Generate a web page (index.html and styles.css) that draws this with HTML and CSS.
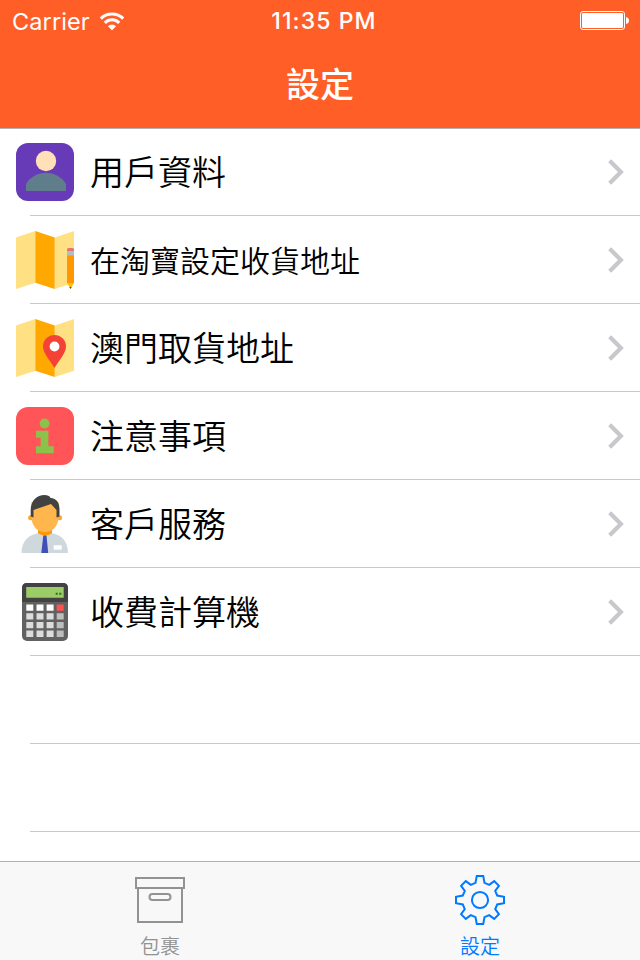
FILE: index.html
```
<!DOCTYPE html>
<html lang="zh-Hant">
	<head>
		<title>設定</title>
		<meta charset="utf-8">
		<link rel="stylesheet" href="styles.css">
	</head>

	<body>
		<div id="header">
			<div class="status">
				<div class="carrier">
					<span>Carrier</span>
					<svg class="wifi" width="26" height="19" viewBox="0 0 26 19">
						<path d="M1.8 6.6a16 16 0 0 1 22.4 0M5.8 10.8a10.2 10.2 0 0 1 14.4 0" fill="none" stroke="#fff" stroke-width="3.1"/>
						<path d="M13 18.2l-4-4a5.7 5.7 0 0 1 8 0z" fill="#fff"/>
					</svg>
				</div>
				<span class="clock">11:35 PM</span>
				<div class="power">
					<svg width="50" height="20" viewBox="0 0 50 20">
						<rect x=".5" y=".5" width="44" height="18" rx="2.5" fill="none" stroke="#fff"/>
						<rect x="2" y="2" width="41" height="15" rx="1.2" fill="#fff"/>
						<path d="M46 6q3 .5 3 3.500t-3 3.500z" fill="#fff"/>
					</svg>
				</div>
			</div>
			<h1>設定</h1>
		</div>

		<ul id="menu">
			<li>
				<svg class="icon" viewBox="0 0 58 58">
					<rect width="58" height="58" rx="12" fill="#673ab7"/>
					<path d="M10 48v-7c4-7 12-11.300 20-11.300s16 4.300 20 11.300v7z" fill="#607d8b"/>
					<circle cx="30" cy="18" r="10.200" fill="#ffe0b9"/>
				</svg>
				<span class="label">用戶資料</span>
				<svg class="arrow" viewBox="0 0 16 26"><path d="M1.700 1.800l11.200 11.200-11.200 11.200"/></svg>
			</li>
			<li>
				<svg class="icon" viewBox="0 0 58 58">
					<path d="M0 6.500L19.300 0v51.700L0 58zM38.700 6.500L58 0v51.700L38.700 58z" fill="#ffe082"/>
					<path d="M19.300 0l19.400 6.500V58l-19.400-6.300z" fill="#ffa800"/>
					<path d="M51 24h7v28h-7z" fill="#ff9800"/>
					<path d="M51 20h7v4.500h-7z" fill="#b0bec5"/>
					<path d="M51 20v-1.500q0-1.500 1.500-1.500h4q1.500 0 1.500 1.500V20z" fill="#e57373"/>
					<path d="M51 52h7l-3.500 6z" fill="#ffc107"/>
					<path d="M53.400 56h2.200l-1.100 2z" fill="#37474f"/>
				</svg>
				<span class="label small">在淘寶設定收貨地址</span>
				<svg class="arrow" viewBox="0 0 16 26"><path d="M1.700 1.800l11.200 11.200-11.200 11.200"/></svg>
			</li>
			<li>
				<svg class="icon" viewBox="0 0 58 58">
					<path d="M0 6.500L19.300 0v51.700L0 58zM38.700 6.500L58 0v51.700L38.700 58z" fill="#ffe082"/>
					<path d="M19.300 0l19.400 6.500V58l-19.400-6.300z" fill="#ffa800"/>
					<path d="M38.500 16A11.500 11.500 0 0 1 50 27.500C50 34 44 40 38.500 49 33 40 27 34 27 27.500A11.500 11.500 0 0 1 38.500 16z" fill="#f44336"/>
					<circle cx="38.500" cy="27.500" r="4.900" fill="#fff"/>
				</svg>
				<span class="label">澳門取貨地址</span>
				<svg class="arrow" viewBox="0 0 16 26"><path d="M1.700 1.800l11.200 11.200-11.200 11.200"/></svg>
			</li>
			<li>
				<svg class="icon" viewBox="0 0 58 58">
					<rect width="58" height="58" rx="12" fill="#ff5558"/>
					<circle cx="28.600" cy="16.500" r="4.900" fill="#8bc34a"/>
					<path d="M20 23.800h12.400v15.500h5.300v6.900H20v-6.900h4.700v-8.600H20z" fill="#8bc34a"/>
				</svg>
				<span class="label">注意事項</span>
				<svg class="arrow" viewBox="0 0 16 26"><path d="M1.700 1.800l11.200 11.200-11.200 11.200"/></svg>
			</li>
			<li>
				<svg class="icon" viewBox="0 0 58 58">
					<path d="M22 34h14v6l-7 4-7-4z" fill="#ff9800"/>
					<path d="M5.500 58C5.500 47 12 40 22 38.300q7 4.500 14 0C46 40 52 47 52 58z" fill="#cfd8dc"/>
					<circle cx="14.600" cy="22.700" r="2.500" fill="#ffa726"/>
					<circle cx="43.600" cy="22.700" r="2.500" fill="#ffa726"/>
					<path d="M15.500 7h27v15.500C42.500 31 36.500 37 29 37s-13.500-6-13.500-14.500z" fill="#ffb74d"/>
					<path d="M14.700 21.500V15C14.700 5.500 21 0 28.500 0c3 0 5 .8 6 3 6 0 9 5 9 11.500v7l-3 1v-7.500L35 9l-17.500 6v7.500z" fill="#424242"/>
					<path d="M27.300 40.500h3.200L32.200 58h-6.900z" fill="#3f51b5"/>
					<path d="M37.700 50.300h8v4.400h-8z" fill="#fff"/>
				</svg>
				<span class="label">客戶服務</span>
				<svg class="arrow" viewBox="0 0 16 26"><path d="M1.700 1.800l11.200 11.200-11.200 11.200"/></svg>
			</li>
			<li>
				<svg class="icon" viewBox="0 0 58 58">
					<rect x="6" width="46" height="58" rx="5" fill="#616161"/>
					<path d="M6 19V5q0-5 5-5h36q5 0 5 5v14z" fill="#424242"/>
					<path d="M10.200 4h37.500v10.700H10.200z" fill="#9ccc65"/>
					<path d="M39.700 9.700h2v2h-2zM43.300 9.700h2v2h-2z" fill="#33691e"/>
					<path d="M10.300 21.500h7v6.300h-7zM20.500 21.500h7v6.300h-7zM30.600 21.500h7v6.300h-7z" fill="#fff"/>
					<path d="M40.700 21.500h7v6.300h-7z" fill="#ff5252"/>
					<path d="M10.300 30.200h7v6.300h-7zM20.500 30.200h7v6.300h-7zM30.600 30.200h7v6.300h-7zM10.300 38.900h7v6.300h-7zM20.500 38.900h7v6.300h-7zM30.600 38.900h7v6.300h-7zM10.300 47.600h7v6.300h-7zM20.500 47.600h7v6.300h-7zM30.600 47.600h7v6.300h-7z" fill="#dcdcdc"/>
					<path d="M40.700 30.200h7v6.300h-7zM40.700 38.900h7v6.300h-7zM40.700 47.600h7v6.300h-7z" fill="#bdbdbd"/>
				</svg>
				<span class="label">收費計算機</span>
				<svg class="arrow" viewBox="0 0 16 26"><path d="M1.700 1.800l11.200 11.200-11.200 11.200"/></svg>
			</li>
			<li></li>
			<li></li>
		</ul>

		<div id="tabs">
			<div class="tab">
				<svg width="52" height="52" viewBox="-26 -26 52 52">
					<path d="M-24-22h48v10h-48zM-22-12v34h44v-34"/>
					<rect x="-10.500" y="-6" width="21" height="6" rx="3"/>
				</svg>
				<span>包裹</span>
			</div>
			<div class="tab active">
				<svg width="52" height="52" viewBox="-26 -26 52 52">
					<path d="M-3.200-24H3.200L4.500-17.200 9.200-15.200 14.200-18.900 18.900-14.200 15.200-9.200 17.200-4.500 24-3.200V3.200L17.200 4.500 15.200 9.200 18.900 14.200 14.200 18.900 9.200 15.200 4.500 17.200 3.200 24H-3.200L-4.500 17.200-9.200 15.200-14.200 18.900-18.900 14.200-15.200 9.200-17.200 4.500-24 3.200V-3.200L-17.200-4.500-15.200-9.200-18.900-14.200-14.200-18.900-9.200-15.200-4.500-17.200z"/>
					<circle r="8.100"/>
				</svg>
				<span>設定</span>
			</div>
		</div>
	</body>
</html>
```

FILE: styles.css
```
body, ul, li, h1 {
	margin: 0;
	padding: 0;
}
li {
	list-style: none;
}
svg {
	display: block;
	flex: none;
}

body {
	width: 640px;
	height: 960px;
	display: flex;
	flex-direction: column;
	overflow: hidden;
	background: #fff;
	font-family: "Noto Sans CJK TC", sans-serif;
	font-weight: 350;
}

#header {
	height: 128px;
	background: #ff5e27;
	border-bottom: 1px solid #b2b2b2;
	color: #fff;
}
.status {
	height: 41px;
	display: grid;
	grid-template-columns: 1fr auto 1fr;
	align-items: center;
	padding: 0 10px 0 12px;
	font: 24px/41px Inter, sans-serif;
}
.carrier {
	display: flex;
	align-items: center;
	gap: 9px;
	font-size: 23.5px;
	letter-spacing: 0.1px;
}
.clock {
	font-size: 23px;
	font-weight: 500;
	letter-spacing: 1.1px;
	margin-left: 6px;
	padding-top: 1px;
}
.power {
	display: flex;
	justify-content: flex-end;
}
#header h1 {
	text-align: center;
	font-size: 34px;
	font-weight: 500;
	line-height: 84px;
}

#menu {
	flex: 1;
	min-height: 0;
	overflow: hidden;
}
#menu li {
	height: 86px;
	margin-left: 30px;
	border-bottom: 1px solid #c8c7cc;
	display: flex;
	align-items: center;
	padding-right: 16px;
}
#menu li + li {
	height: 87px;
}
#menu .icon {
	width: 58px;
	height: 58px;
	margin-left: -14px;
}
#menu .label {
	flex: 1;
	margin-left: 16px;
	padding-bottom: 2px;
	font-size: 34px;
	line-height: 50px;
	color: #000;
}
#menu .small {
	font-size: 30px;
}
#menu .arrow {
	width: 16px;
	height: 26px;
}
.arrow path {
	fill: none;
	stroke: #c7c7cc;
	stroke-width: 4.2;
}

#tabs {
	height: 98px;
	background: #f8f8f8;
	border-top: 1px solid #b2b2b2;
	display: flex;
}
.tab {
	flex: 1;
	display: flex;
	flex-direction: column;
	align-items: center;
	padding-top: 12px;
	color: #929292;
	font-size: 20px;
	line-height: 40px;
}
.tab svg {
	fill: none;
	stroke: currentColor;
	stroke-width: 2;
}
.active {
	color: #007aff;
}
```
